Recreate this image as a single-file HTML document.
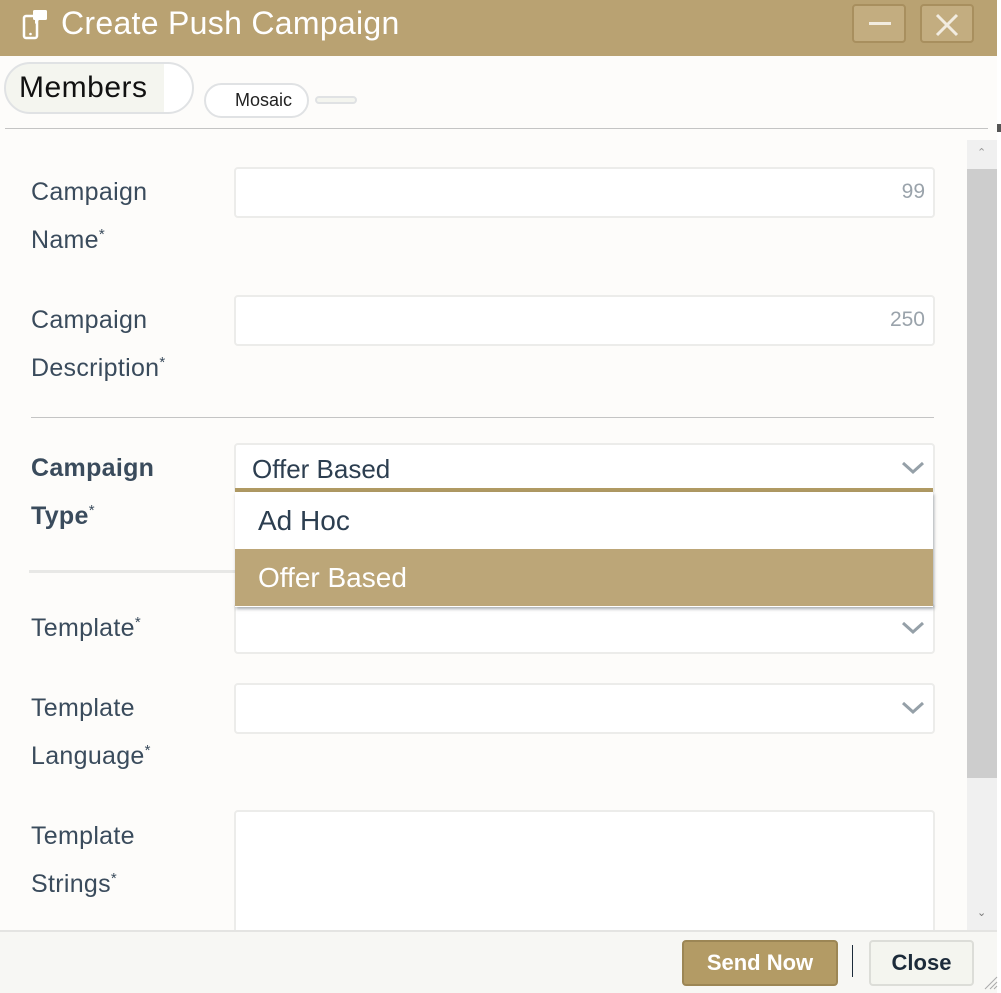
<!DOCTYPE html>
<html><head><meta charset="utf-8"><style>
*{box-sizing:border-box;margin:0;padding:0}
body{width:1001px;height:993px;overflow:hidden;background:#fdfcfa;font-family:"Liberation Sans",sans-serif;position:relative;color:#34495e}
.a{position:absolute}
.hdr{left:0;top:0;width:997px;height:56px;background:#b9a272}
.title{left:61px;top:5px;font-size:32px;color:#fff;letter-spacing:0.3px}
.wb{top:4px;width:54px;height:39px;border:2px solid #a88f5e;border-radius:4px;background:#c3ad80}
.lbl{left:31px;font-size:25px;line-height:48px;color:#3a4b5c;letter-spacing:0.3px}
.lbl sup{font-size:15px;position:relative;top:-9px;vertical-align:baseline;line-height:0}
.inp{left:234px;width:701px;height:51px;border:2px solid #ececea;border-radius:4px;background:#fff}
.cnt{right:8px;top:11px;font-size:21px;color:#9aa3ab}
.chev{right:8px;top:16px}
</style></head><body>
<div class="a hdr"></div>
<svg class="a" style="left:22px;top:8px" width="28" height="32" viewBox="0 0 28 32"><rect x="2" y="8" width="13" height="22" rx="2" fill="none" stroke="#fff" stroke-width="2.5"/><rect x="11" y="2" width="14" height="10" rx="1.5" fill="#fff"/><path d="M13 12 L13 16 L17 12Z" fill="#fff"/><circle cx="8.5" cy="26" r="1.3" fill="#fff"/></svg>
<div class="a title">Create Push Campaign</div>
<div class="a wb" style="left:852px"><div class="a" style="left:15px;top:16px;width:22px;height:3px;background:#f2ece0"></div></div>
<div class="a wb" style="left:920px"><svg class="a" style="left:13px;top:7px" width="24" height="24"><path d="M2 2L22 22M22 2L2 22" stroke="#f2ece0" stroke-width="3"/></svg></div>
<div class="a" style="left:4px;top:62px;width:190px;height:52px;border:2px solid #e0e2e4;border-radius:26px;background:linear-gradient(90deg,#f4f5ef 85%,#fff 85%)"></div>
<div class="a" style="left:19px;top:71px;font-size:30px;color:#111;letter-spacing:0.5px">Members</div>
<div class="a" style="left:204px;top:83px;width:105px;height:35px;border:2px solid #e0e2e4;border-radius:18px;background:#fff"></div>
<div class="a" style="left:235px;top:90px;font-size:18px;color:#222">Mosaic</div>
<div class="a" style="left:315px;top:96px;width:42px;height:8px;border:2px solid #e0e2e4;border-radius:4px;background:#f4f5ef"></div>
<div class="a" style="left:5px;top:128px;width:983px;height:1px;background:#c4c4c4"></div>
<div class="a" style="left:997px;top:0;width:4px;height:993px;background:#fff"></div>
<div class="a" style="left:997px;top:124px;width:4px;height:8px;background:#555"></div>

<div class="a lbl" style="top:168px">Campaign<br>Name<sup>*</sup></div>
<div class="a inp" style="top:167px"><div class="a cnt">99</div></div>
<div class="a lbl" style="top:296px">Campaign<br>Description<sup>*</sup></div>
<div class="a inp" style="top:295px"><div class="a cnt">250</div></div>
<div class="a" style="left:31px;top:417px;width:903px;height:1px;background:#c4c4c4"></div>
<div class="a lbl" style="top:444px;font-weight:bold">Campaign<br>Type<sup style="font-weight:normal">*</sup></div>
<div class="a" style="left:29px;top:570px;width:206px;height:3px;background:#e8e8e6"></div>
<div class="a inp" style="top:443px"><div class="a" style="left:16px;top:9px;font-size:26px;color:#2c3e50">Offer Based</div>
<svg class="a chev" width="24" height="14"><path d="M2 2L12 11L22 2" fill="none" stroke="#95a0a8" stroke-width="3"/></svg></div>
<div class="a lbl" style="top:604px">Template<sup>*</sup></div>
<div class="a inp" style="top:603px"><svg class="a chev" width="24" height="14"><path d="M2 2L12 11L22 2" fill="none" stroke="#95a0a8" stroke-width="3"/></svg></div>
<div class="a lbl" style="top:684px">Template<br>Language<sup>*</sup></div>
<div class="a inp" style="top:683px"><svg class="a chev" width="24" height="14"><path d="M2 2L12 11L22 2" fill="none" stroke="#95a0a8" stroke-width="3"/></svg></div>
<div class="a lbl" style="top:812px">Template<br>Strings<sup>*</sup></div>
<div class="a inp" style="top:810px;height:130px"></div>

<div class="a" style="left:235px;top:488px;width:698px;height:4px;background:#b09a63"></div>
<div class="a" style="left:235px;top:492px;width:698px;height:115px;background:#fff;box-shadow:1px 2px 3px rgba(80,90,100,.5)"></div>
<div class="a" style="left:258px;top:505px;font-size:28px;color:#2c3e50">Ad Hoc</div>
<div class="a" style="left:235px;top:549px;width:698px;height:57px;background:#bca678"></div>
<div class="a" style="left:258px;top:562px;font-size:28px;color:#fff">Offer Based</div>

<div class="a" style="left:967px;top:140px;width:30px;height:790px;background:#f0f0f0"></div>
<div class="a" style="left:967px;top:169px;width:30px;height:609px;background:#cdcdcd"></div>
<div class="a" style="left:977px;top:146px;font-size:11px;color:#999">&#8963;</div>
<div class="a" style="left:977px;top:906px;font-size:11px;color:#777">&#8964;</div>

<div class="a" style="left:0;top:930px;width:997px;height:63px;background:#f7f7f4;border-top:2px solid #e4e4e2"></div>
<div class="a" style="left:682px;top:940px;width:156px;height:46px;background:#b39b65;border:2px solid #9c8655;border-radius:4px;color:#fff;font-size:22px;font-weight:bold;text-align:center;line-height:42px">Send Now</div>
<div class="a" style="left:852px;top:945px;width:1px;height:32px;background:#1c2b3a"></div>
<div class="a" style="left:869px;top:940px;width:105px;height:46px;background:#f4f5ef;border:2px solid #dcddd8;border-radius:4px;color:#1c2b3a;font-size:22px;font-weight:bold;text-align:center;line-height:42px">Close</div>
<svg class="a" style="left:982px;top:974px" width="16" height="16"><path d="M15 3L3 15M15 8L8 15M15 12L12 15" stroke="#aaa" stroke-width="1"/></svg>
</body></html>
